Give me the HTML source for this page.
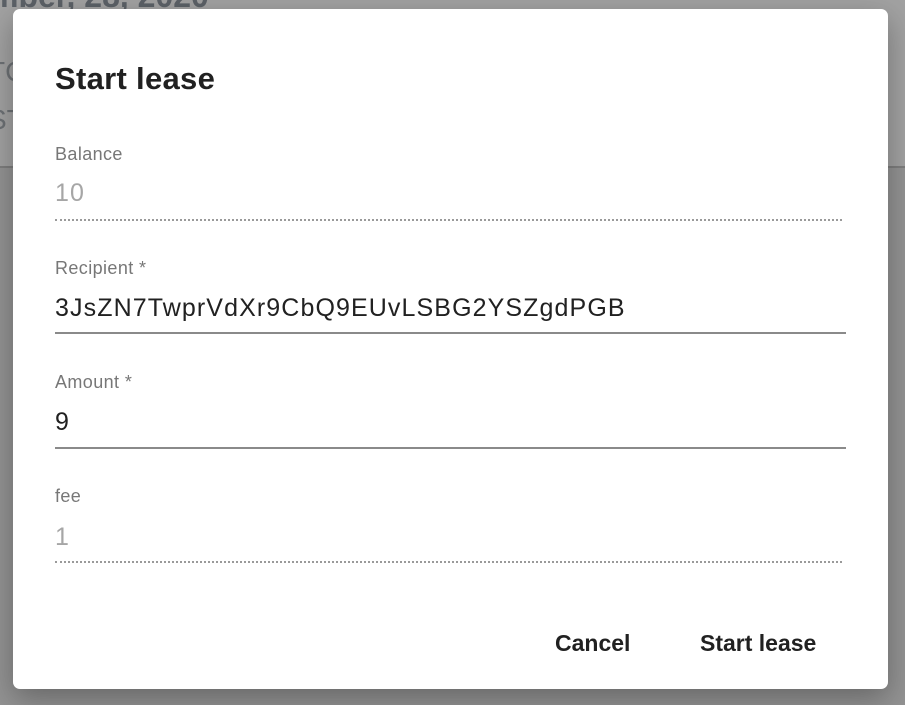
<!DOCTYPE html>
<html><head><style>
body{margin:0;width:905px;height:703px;overflow:hidden;font-family:"Liberation Sans",Roboto,sans-serif;position:relative;background:#a2a2a2}
.bg{position:absolute;color:#2e3640;opacity:.45}
.low{position:absolute;left:0;top:166px;width:905px;height:537px;background:#939393;border-top:2px solid #7e7e7e}
.dlg{position:absolute;left:13px;top:9px;width:875px;height:680px;background:#fff;border-radius:7px;box-shadow:0 10px 30px rgba(0,0,0,.3)}
.t{position:absolute;left:42px;top:52px;font-size:31px;font-weight:bold;color:#212121;margin:0;letter-spacing:0.3px}
.lab{position:absolute;left:42px;font-size:18px;color:#777;letter-spacing:0.4px}
.val{position:absolute;left:42px;font-size:25px;color:#212121;letter-spacing:1.1px}
.dis{color:#a6a6a6}
.dot{position:absolute;left:42px;width:787px;border-top:2px dotted #9a9a9a}
.sol{position:absolute;left:42px;width:791px;border-top:2px solid #8a8a8a}
.btn{position:absolute;top:621px;font-size:23px;font-weight:bold;color:#212121}
</style></head><body>
<div class="bg" style="left:-10px;top:-22px;font-size:32px;font-weight:bold;opacity:.6">mber, 28, 2020</div>
<div class="bg" style="left:-12px;top:56px;font-size:28px">TC</div>
<div class="bg" style="left:-12px;top:104px;font-size:28px">ST</div>
<div class="low"></div>
<div class="dlg">
<div class="t">Start lease</div>
<div class="lab" style="top:135px">Balance</div>
<div class="val dis" style="top:170px">10</div>
<div class="dot" style="top:210px"></div>
<div class="lab" style="top:249px">Recipient *</div>
<div class="val" style="top:285px">3JsZN7TwprVdXr9CbQ9EUvLSBG2YSZgdPGB</div>
<div class="sol" style="top:323px"></div>
<div class="lab" style="top:363px">Amount *</div>
<div class="val" style="top:399px">9</div>
<div class="sol" style="top:438px"></div>
<div class="lab" style="top:477px">fee</div>
<div class="val dis" style="top:514px">1</div>
<div class="dot" style="top:552px"></div>
<div class="btn" style="left:542px">Cancel</div>
<div class="btn" style="left:687px">Start lease</div>
</div>
</body></html>
